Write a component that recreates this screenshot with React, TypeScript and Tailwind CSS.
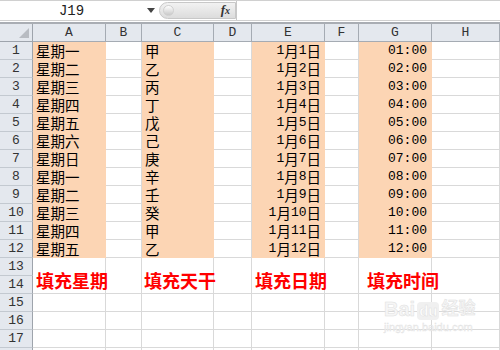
import React from 'react';

const WEEK = ['星期一', '星期二', '星期三', '星期四', '星期五', '星期六', '星期日', '星期一', '星期二', '星期三', '星期四', '星期五'];
const GAN = ['甲', '乙', '丙', '丁', '戊', '己', '庚', '辛', '壬', '癸', '甲', '乙'];
const LETTERS = ['A', 'B', 'C', 'D', 'E', 'F', 'G', 'H'];

const CJK = { fontFamily: '"Noto Sans CJK SC", sans-serif' };
const MONO = { fontFamily: '"Liberation Mono", "Noto Sans CJK SC", monospace' };

const fill = 'bg-[#FCD5B4] border-b border-r border-[#FCD5B4] leading-[17px]';
const blank = 'border-b border-r border-[#D9D9D9]';
const rowHead = 'flex items-center justify-center bg-[#E4E8EE] border-b border-r border-b-[#C3C9D0] border-r-[#9EA4AC] text-[13px] leading-[17px] text-[#333]';
const label = 'row-span-2 flex items-end pb-[3px] whitespace-nowrap text-[18px] leading-[20px] font-bold text-[#FF0000]';

function RowHead({ n }: { n: number }) {
  return (
    <div className={`${rowHead} col-start-1`} style={MONO}>
      {n}
    </div>
  );
}

function FormulaBar() {
  return (
    <div className="h-[24px] flex flex-col">
      <div className="h-[21px] flex border-t border-b border-[#D0D0D0] bg-white">
        <div className="w-[143px] flex items-center justify-center text-[14px] leading-[18px] text-[#222]" style={MONO}>
          J19
        </div>
        <div className="w-[16px] flex items-center justify-center">
          <svg width="8" height="5" viewBox="0 0 8 5">
            <path d="M0 0 L8 0 L4 5 Z" fill="#444" />
          </svg>
        </div>
        <div className="w-[77px] my-[1px] flex items-center rounded-l-full bg-gradient-to-b from-[#F2F2F2] to-[#DCDCDC] border border-[#C8C8C8]">
          <div className="ml-[3px] w-[11px] h-[11px] rounded-full bg-gradient-to-b from-[#FFFFFF] to-[#C9C9C9] border border-[#D0D0D0]" />
          <div className="ml-auto mr-[5px] text-[13px] leading-[16px] italic font-bold text-[#333]" style={{ fontFamily: '"Liberation Serif", serif' }}>
            f<span className="text-[10px]">x</span>
          </div>
        </div>
        <div className="flex-1 border-l border-[#C8C8C8] bg-white" />
      </div>
      <div className="h-[1px] bg-white" />
      <div className="h-[2px] bg-[#A9ADB3]" />
    </div>
  );
}

export default function App() {
  return (
    <div className="relative w-[500px] h-[350px] overflow-hidden bg-white">
      <FormulaBar />
      <div className="grid grid-cols-[33px_73px_36px_72px_38px_73px_34px_73px_1fr] auto-rows-[18px]">
        {/* column headers */}
        <div className="relative bg-[#E4E8EE] border-b border-r border-[#9EA4AC]">
          <svg className="absolute right-[3px] bottom-[3px]" width="10" height="10" viewBox="0 0 10 10">
            <path d="M10 0 L10 10 L0 10 Z" fill="#B8BCC2" />
          </svg>
        </div>
        {LETTERS.map(l => (
          <div key={l} className="flex items-center justify-center bg-[#E4E8EE] border-b border-r border-[#A5ABB3] text-[13px] leading-[17px] text-[#333]" style={MONO}>
            {l}
          </div>
        ))}

        {/* rows 1-12 */}
        {WEEK.map((w, i) => (
          <React.Fragment key={i}>
            <RowHead n={i + 1} />
            <div className={`${fill} flex items-center pl-[3px] text-[14.5px] text-black`} style={CJK}>{w}</div>
            <div className={blank} />
            <div className={`${fill} flex items-center pl-[3px] text-[14.5px] text-black`} style={CJK}>{GAN[i]}</div>
            <div className={blank} />
            <div className={`${fill} flex items-center justify-end pr-[3px] text-[14.5px] text-black`} style={CJK}>
              <span className="text-[13px]" style={MONO}>1</span>月<span className="text-[13px]" style={MONO}>{i + 1}</span>日
            </div>
            <div className={blank} />
            <div className={`${fill} flex items-center justify-end pr-[4px] text-[13px] text-black`} style={MONO}>
              {String(i + 1).padStart(2, '0')}:00
            </div>
            <div className={blank} />
          </React.Fragment>
        ))}

        {/* rows 13-14 with labels */}
        <RowHead n={13} />
        <div className={`${blank} ${label} pl-[3px]`} style={CJK}>填充星期</div>
        <div className={`${blank} row-span-2`} />
        <div className={`${blank} ${label} pl-[2px]`} style={CJK}>填充天干</div>
        <div className={`${blank} row-span-2`} />
        <div className={`${blank} ${label} pl-[3px]`} style={CJK}>填充日期</div>
        <div className={`${blank} row-span-2`} />
        <div className={`${blank} ${label} pl-[8px]`} style={CJK}>填充时间</div>
        <div className={`${blank} row-span-2`} />
        <RowHead n={14} />

        {/* rows 15-18 */}
        {[15, 16, 17, 18].map(n => (
          <React.Fragment key={n}>
            <RowHead n={n} />
            {LETTERS.map(l => (
              <div key={l} className={blank} />
            ))}
          </React.Fragment>
        ))}
      </div>

      {/* watermark */}
      <div className="absolute left-[384px] top-[298px] flex flex-col items-start pointer-events-none select-none">
        <div className="flex items-end gap-[2px] text-[20px] leading-[22px] font-bold text-[#F6F6F6]" style={{ fontFamily: '"Liberation Sans", "Noto Sans CJK SC", sans-serif', WebkitTextStroke: '0.5px #E0E0E0' }}>
          <span>Bai</span>
          <span className="px-[2px] rounded-[4px] text-[15px] leading-[18px] bg-[#F0F0F0] text-white">du</span>
          <span className="text-[17px]">经验</span>
        </div>
        <div className="text-[11px] leading-[13px] text-[#F0F0F0] mt-[1px]" style={{ fontFamily: '"Liberation Sans", sans-serif', WebkitTextStroke: '0.3px #E2E2E2' }}>
          jingyan.baidu.com
        </div>
      </div>
    </div>
  );
}
